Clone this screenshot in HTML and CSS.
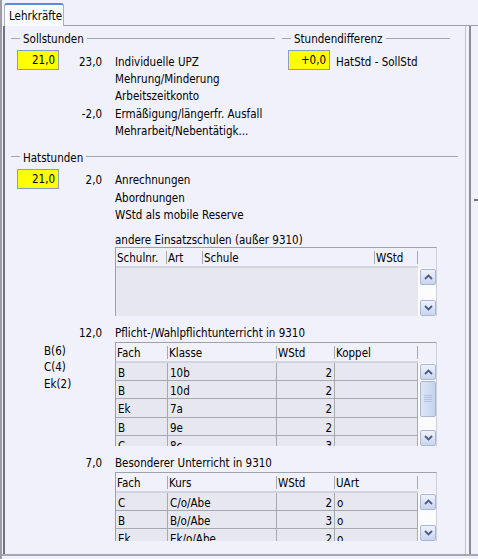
FILE: index.html
```html
<!DOCTYPE html>
<html lang="de">
<head>
<meta charset="utf-8">
<title>Lehrkräfte</title>
<link rel="stylesheet" href="styles.css">
</head>
<body>
<div class="app">
  <div class="tabstrip">
    <div class="tab">Lehrkräfte</div>
    <div class="tabfill"></div>
  </div>
  <div class="frame">
    <div class="panel">
      <div class="top-row">
        <section class="group g-soll">
          <div class="gtitle"><span>Sollstunden</span></div>
          <div class="gbody">
            <div class="line"><div class="ybox">21,0</div><div class="num">23,0</div><div class="lbl">Individuelle UPZ</div></div>
            <div class="line"><div></div><div class="num"></div><div class="lbl">Mehrung/Minderung</div></div>
            <div class="line"><div></div><div class="num"></div><div class="lbl">Arbeitszeitkonto</div></div>
            <div class="line"><div></div><div class="num">-2,0</div><div class="lbl">Ermäßigung/längerfr. Ausfall</div></div>
            <div class="line"><div></div><div class="num"></div><div class="lbl">Mehrarbeit/Nebentätigk...</div></div>
          </div>
        </section>
        <section class="group g-diff">
          <div class="gtitle"><span>Stundendifferenz</span></div>
          <div class="gbody">
            <div class="diffline"><div class="ybox">+0,0</div><div class="lbl">HatStd - SollStd</div></div>
          </div>
        </section>
      </div>

      <section class="group g-hat">
        <div class="gtitle"><span>Hatstunden</span></div>
        <div class="gbody">
          <div class="line"><div class="ybox">21,0</div><div class="num">2,0</div><div class="lbl">Anrechnungen</div></div>
          <div class="line"><div></div><div class="num"></div><div class="lbl">Abordnungen</div></div>
          <div class="line"><div></div><div class="num"></div><div class="lbl">WStd als mobile Reserve</div></div>
          <div class="line sp"><div></div><div class="num"></div><div class="lbl">andere Einsatzschulen (außer 9310)</div></div>

          <div class="tbl t1">
            <div class="thead">
              <div class="th">Schulnr.</div><div class="th">Art</div><div class="th">Schule</div><div class="th">WStd</div><div class="th-end"></div>
            </div>
            <div class="tbody b48">
              <div class="rows"></div>
              <div class="vscroll">
                <div class="sb"><svg width="9" height="6" viewBox="0 0 9 6"><path d="M1 5 L4.5 1.5 L8 5" fill="none" stroke="#4a5c88" stroke-width="1.8"/></svg></div>
                <div class="sb"><svg width="9" height="6" viewBox="0 0 9 6"><path d="M1 1 L4.5 4.5 L8 1" fill="none" stroke="#4a5c88" stroke-width="1.8"/></svg></div>
              </div>
            </div>
          </div>

          <div class="line sp2"><div></div><div class="num">12,0</div><div class="lbl">Pflicht-/Wahlpflichtunterricht in 9310</div></div>

          <div class="withside">
            <div class="side">B(6)<br>C(4)<br>Ek(2)</div>
            <div class="tbl t2">
              <div class="thead">
                <div class="th">Fach</div><div class="th">Klasse</div><div class="th">WStd</div><div class="th">Koppel</div><div class="th-end"></div>
              </div>
              <div class="tbody b83">
                <div class="rows">
                  <div class="tr"><div class="td">B</div><div class="td">10b</div><div class="td r">2</div><div class="td"></div></div>
                  <div class="tr"><div class="td">B</div><div class="td">10d</div><div class="td r">2</div><div class="td"></div></div>
                  <div class="tr"><div class="td">Ek</div><div class="td">7a</div><div class="td r">2</div><div class="td"></div></div>
                  <div class="tr"><div class="td">B</div><div class="td">9e</div><div class="td r">2</div><div class="td"></div></div>
                  <div class="tr"><div class="td">C</div><div class="td">8c</div><div class="td r">3</div><div class="td"></div></div>
                </div>
                <div class="vscroll">
                  <div class="sb"><svg width="9" height="6" viewBox="0 0 9 6"><path d="M1 5 L4.5 1.5 L8 5" fill="none" stroke="#4a5c88" stroke-width="1.8"/></svg></div>
                  <div class="thumb"><svg width="8" height="7" viewBox="0 0 8 7"><path d="M0 0.5 H8 M0 2.5 H8 M0 4.5 H8 M0 6.5 H8" stroke="#b4c0dc" stroke-width="1"/></svg></div>
                  <div class="spacer"></div>
                  <div class="sb"><svg width="9" height="6" viewBox="0 0 9 6"><path d="M1 1 L4.5 4.5 L8 1" fill="none" stroke="#4a5c88" stroke-width="1.8"/></svg></div>
                </div>
              </div>
            </div>
          </div>

          <div class="line sp3"><div></div><div class="num">7,0</div><div class="lbl">Besonderer Unterricht in 9310</div></div>

          <div class="tbl t3">
            <div class="thead">
              <div class="th">Fach</div><div class="th">Kurs</div><div class="th">WStd</div><div class="th">UArt</div><div class="th-end"></div>
            </div>
            <div class="tbody b48">
              <div class="rows">
                <div class="tr"><div class="td">C</div><div class="td">C/o/Abe</div><div class="td r">2</div><div class="td">o</div></div>
                <div class="tr"><div class="td">B</div><div class="td">B/o/Abe</div><div class="td r">3</div><div class="td">o</div></div>
                <div class="tr"><div class="td">Ek</div><div class="td">Ek/o/Abe</div><div class="td r">2</div><div class="td">o</div></div>
              </div>
              <div class="vscroll">
                <div class="sb"><svg width="9" height="6" viewBox="0 0 9 6"><path d="M1 5 L4.5 1.5 L8 5" fill="none" stroke="#4a5c88" stroke-width="1.8"/></svg></div>
                <div class="sb"><svg width="9" height="6" viewBox="0 0 9 6"><path d="M1 1 L4.5 4.5 L8 1" fill="none" stroke="#4a5c88" stroke-width="1.8"/></svg></div>
              </div>
            </div>
          </div>
        </div>
      </section>
    </div>
    <div class="divider"></div>
    <div class="rstrip"><div class="grip"></div></div>
  </div>
</div>
</body>
</html>
```

FILE: styles.css
```css
html, body {
  margin: 0;
  padding: 0;
}
body {
  background: #f1f1fb;
  font-family: "DejaVu Sans Condensed", "DejaVu Sans", sans-serif;
  font-size: 11.5px;
  color: #000;
}
.app {
  width: 478px;
  height: 559px;
  box-sizing: border-box;
  border-left: 2px solid #9d9da6;
  display: flex;
  flex-direction: column;
  overflow: hidden;
}
.tabstrip {
  display: flex;
  height: 26px;
  padding-left: 1px;
  flex: none;
}
.tab {
  margin: 3px 0 0 1px;
  width: 60px;
  height: 23px;
  box-sizing: border-box;
  border: 1px solid #aab2c8;
  border-top: 2px solid #5b8bd8;
  border-bottom: 0;
  border-radius: 3px 3px 0 0;
  background: #fbfbff;
  padding: 1px 0 0 4px;
  line-height: 20px;
  white-space: nowrap;
}
.tabfill {
  flex: 1;
  border-bottom: 1px solid #9ea0ac;
}
.frame {
  flex: 1;
  display: flex;
  padding-left: 1px;
  border-bottom: 2px solid #a2a8b6;
  margin-bottom: 3px;
  min-height: 0;
}
.panel {
  width: 463px;
  box-sizing: border-box;
  border-left: 2px solid #72727a;
  border-right: 1px solid #c4c4cc;
  padding: 5px 0 0 6px;
  overflow: hidden;
}
.divider {
  margin-left: 3px;
  width: 2px;
  background: #8c8c96;
}
.rstrip {
  flex: 1;
  padding-top: 173px;
}
.grip {
  margin-left: 3px;
  width: 4px;
  height: 2px;
  background: #74747e;
}
.top-row {
  display: flex;
  gap: 7px;
}
.g-soll { width: 264px; }
.g-diff { width: 168px; }
.g-hat { width: 447px; margin-top: 11px; }
.gtitle {
  display: flex;
  align-items: center;
  gap: 3px;
  height: 14px;
  line-height: 14px;
  white-space: nowrap;
}
.gtitle span {
  padding-top: 2px;
}
.gtitle::before {
  content: "";
  width: 9px;
  height: 1px;
  background: #a4a4b0;
}
.gtitle::after {
  content: "";
  flex: 1;
  height: 1px;
  background: #a4a4b0;
}
.gbody {
  padding: 7px 0 0 6px;
}
.line {
  display: grid;
  grid-template-columns: 42px 43px 1fr;
  height: 17.4px;
  box-sizing: border-box;
  padding-top: 1.5px;
  line-height: 17.4px;
  white-space: nowrap;
}
.line.sp { margin-top: 6px; height: 18px; line-height: 18px; }
.line.sp2 { margin-top: 6px; height: 18px; line-height: 18px; }
.line.sp3 { margin-top: 6.7px; height: 18px; line-height: 18px; }
.num { text-align: right; }
.lbl { padding-left: 13px; }
.diffline {
  display: grid;
  grid-template-columns: 42px 1fr;
  height: 17.4px;
  box-sizing: border-box;
  padding-top: 1.5px;
  line-height: 17.4px;
  white-space: nowrap;
}
.diffline .lbl { padding-left: 6px; }
.ybox {
  align-self: start;
  margin-top: -3.5px;
  height: 20px;
  box-sizing: border-box;
  border: 1px solid #8a9cc2;
  background: #ffff00;
  text-align: right;
  padding: 1px 3px 0 0;
  line-height: 17px;
}

/* tables */
.tbl {
  width: 322px;
  box-sizing: border-box;
  border-top: 1px solid #a0a0aa;
  border-left: 1px solid #a0a0aa;
  border-right: 1px solid #cfcfd8;
  margin-left: 98px;
}
.withside .tbl { margin-left: 0; }
.t1 { --cols: 51px 36px 172px 43px; }
.t2, .t3 { --cols: 52px 109px 58px 83px; }
.t3 { margin-top: 1px; }
.thead {
  display: grid;
  grid-template-columns: var(--cols) 18px;
  height: 20px;
}
.th {
  height: 16px;
  padding: 2px 0 0 1px;
  line-height: 17px;
  border-bottom: 2px solid #d4d4de;
  white-space: nowrap;
  background: linear-gradient(#a8a8b2, #a8a8b2) no-repeat right 0 top 3px / 1px 13px;
}
.th-end { height: 18px; }
.tbody {
  display: flex;
}
.b48 { height: 48px; }
.b83 { height: 83.3px; }
.rows {
  width: 302px;
  background: #e7e7ef;
  overflow: hidden;
}
.tr {
  display: grid;
  grid-template-columns: var(--cols);
  height: 18.33px;
  box-sizing: border-box;
  border-bottom: 1px solid #a8a8b0;
}
.td {
  border-right: 1px solid #a8a8b0;
  padding: 2px 2px 0;
  line-height: 16.33px;
  white-space: nowrap;
}
.td.r { text-align: right; }
.vscroll {
  width: 18px;
  background: #fcfcff;
  display: flex;
  flex-direction: column;
  justify-content: space-between;
  padding-top: 1px;
  box-sizing: border-box;
}
.sb, .thumb {
  margin-left: 2px;
  width: 16px;
  height: 16px;
  box-sizing: border-box;
  border: 1px solid #a9b6d6;
  border-radius: 2px;
  background: linear-gradient(#eef2fb, #c9d4ee);
  display: flex;
  align-items: center;
  justify-content: center;
  flex: none;
}
.thumb {
  height: 36px;
  margin-top: 1px;
  background: linear-gradient(90deg, #dde5f6, #c6d2ee);
}
.spacer { flex: 1; }
.withside {
  display: grid;
  grid-template-columns: 98px 322px;
  margin-top: 1.5px;
}
.side {
  padding-top: 1px;
  padding-left: 27px;
  line-height: 16.7px;
}
```
